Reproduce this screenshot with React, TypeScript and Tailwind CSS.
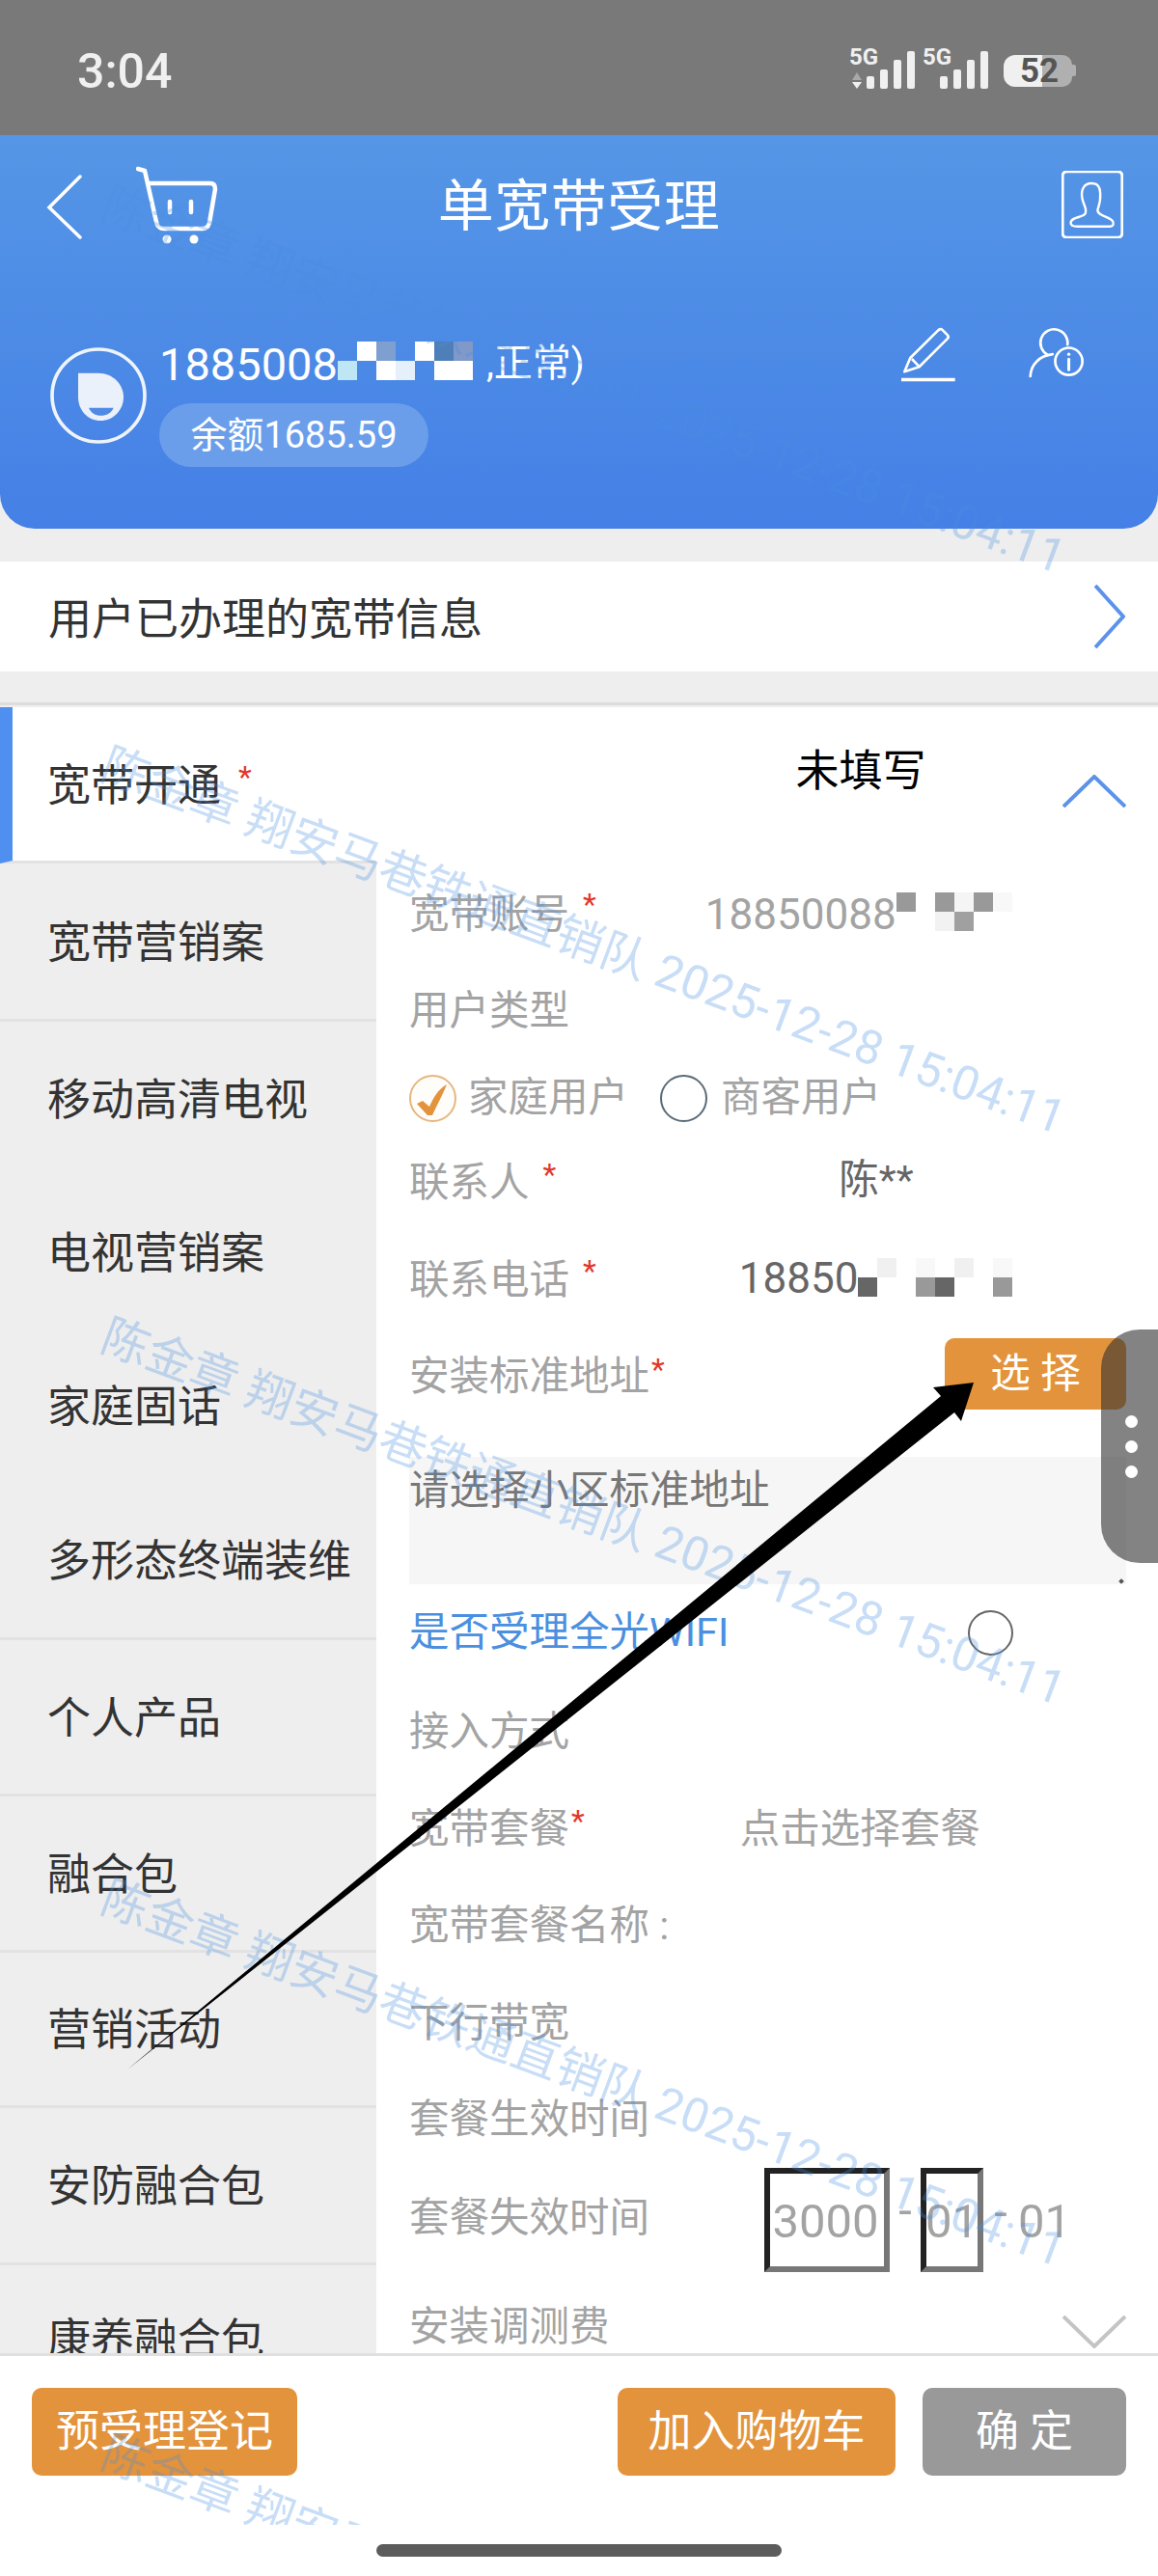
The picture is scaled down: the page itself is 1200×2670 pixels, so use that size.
const sideItems = [
  { label: '宽带开通', cls: 'h-[162px] border-b-[3px] border-b-[#e2e2e2] bg-white', active: true },
  { label: '宽带营销案', cls: 'h-[164px] border-b-[3px] border-b-[#e2e2e2]' },
  { label: '移动高清电视', cls: 'h-[160px]' },
  { label: '电视营销案', cls: 'h-[158px]' },
  { label: '家庭固话', cls: 'h-[159px]' },
  { label: '多形态终端装维', cls: 'h-[164px] border-b-[3px] border-b-[#e2e2e2]' },
  { label: '个人产品', cls: 'h-[162px] border-b-[3px] border-b-[#e2e2e2]' },
  { label: '融合包', cls: 'h-[162px] border-b-[3px] border-b-[#e2e2e2]' },
  { label: '营销活动', cls: 'h-[161px] border-b-[3px] border-b-[#e2e2e2]' },
  { label: '安防融合包', cls: 'h-[163px] border-b-[3px] border-b-[#e2e2e2]' },
  { label: '康养融合包', cls: 'h-[152px]' },
];

const watermarks = ['top-[187px]', 'top-[768px]', 'top-[1360px]', 'top-[1942px]', 'top-[2518px]'];

function Star({ className = '' }: { className?: string }) {
  return <span className={`text-[#e2382b] text-[32px] leading-none self-start mt-[26px] ${className}`}>*</span>;
}

function Mosaic({ rows }: { rows: string[][] }) {
  return (
    <div className="flex flex-col">
      {rows.map((row, i) => (
        <div key={i} className="flex">
          {row.map((c, j) => (
            <div key={j} className="w-[20px] h-[20px]" style={{ background: c }} />
          ))}
        </div>
      ))}
    </div>
  );
}

function Radio({ checked, className = '' }: { checked?: boolean; className?: string }) {
  if (checked) {
    return (
      <svg width="49" height="49" viewBox="0 0 49 49" className={className}>
        <circle cx="24.5" cy="24.5" r="23.5" fill="#fffdfa" stroke="#e8b67f" strokeWidth="2" />
        <path d="M8 30 L14 27 L21 33 C25 24 30 15 39 10 C35 20 29 31 24 42 L19 42 Z" fill="#e3933c" />
      </svg>
    );
  }
  return <div className={`w-[49px] h-[49px] rounded-full border-2 border-[#5a6b78] ${className}`} />;
}

function StatusIcons() {
  const bars = [
    [18, 79, 13],
    [32, 72, 20],
    [46, 62, 30],
    [60, 53, 39],
  ];
  return (
    <svg width="156" height="50" viewBox="880 48 156 50" className="block">
      <text x="880" y="67" fontFamily="Roboto" fontWeight="700" fontSize="24" fill="#f0f0f0">5G</text>
      <text x="956" y="67" fontFamily="Roboto" fontWeight="700" fontSize="24" fill="#f0f0f0">5G</text>
      <path d="M888 75 L893 83 H883 Z" fill="#a8a8a8" />
      <path d="M883 85 H893 L888 92 Z" fill="#f0f0f0" />
      {bars.map(([x, y, h]) => (
        <rect key={x} x={880 + x} y={y} width="8" height={h} rx="2" fill="#f0f0f0" />
      ))}
      {bars.map(([x, y, h]) => (
        <rect key={x} x={956 + x} y={y} width="8" height={h} rx="2" fill="#f0f0f0" />
      ))}
    </svg>
  );
}

function Battery() {
  return (
    <div className="relative flex items-center">
      <div className="w-[40px] h-[33px] bg-[#f0f0f0] rounded-l-[12px]" />
      <div className="w-[31px] h-[33px] bg-[#b0b0b0] rounded-r-[10px]" />
      <div className="w-[4px] h-[12px] bg-[#b0b0b0] rounded-r-[2px]" />
      <span className="absolute left-[17px] top-[-5px] font-bold text-[35px] leading-[43px] text-[#555]">52</span>
    </div>
  );
}

function CartIcon() {
  return (
    <svg width="86" height="84" viewBox="140 172 86 84" fill="none" stroke="white" strokeWidth="4.5" strokeLinecap="round" strokeLinejoin="round">
      <path d="M142 175 L149 177 L161 230 C162 235 164 237 169 237 H209 C213 237 215 235 216 231 L222 196 C222 192 220 190 217 190 H154" />
      <path d="M175 209 V220 M197 209 V220" />
      <circle cx="172" cy="248" r="4.5" fill="white" stroke="none" />
      <circle cx="200" cy="248" r="4.5" fill="white" stroke="none" />
    </svg>
  );
}

function ContactIcon() {
  return (
    <svg width="64" height="70" viewBox="543 56 186 206" fill="none" stroke="white">
      <rect x="545" y="58" width="182" height="202" rx="14" strokeWidth="9" />
      <path d="M640 95 C610 90 600 115 605 140 C608 160 620 170 615 185 C610 200 570 195 570 215 C570 225 580 226 590 226 L690 226 C700 226 702 218 698 210 C690 195 650 195 652 175 C655 165 662 150 660 125 C660 105 650 95 640 95 Z" strokeWidth="7" strokeLinejoin="round" />
    </svg>
  );
}

function EditIcon() {
  return (
    <svg width="63" height="60" viewBox="30 520 190 180" fill="none" stroke="white" strokeLinejoin="round">
      <path d="M52 665 L70 622 L158 535 C163 531 167 531 171 535 L186 550 C190 554 190 558 186 562 L98 650 Z" strokeWidth="8" />
      <path d="M75 625 L97 648" strokeWidth="8" />
      <path d="M42 690 H210" strokeWidth="10" />
    </svg>
  );
}

function UserInfoIcon() {
  return (
    <svg width="62" height="57" viewBox="425 530 185 170" fill="none" stroke="white" strokeWidth="8" strokeLinecap="round">
      <path d="M490 622 A42 42 0 1 1 551 590" />
      <path d="M436 688 C438 650 465 625 505 620" />
      <circle cx="555" cy="642" r="42" />
      <path d="M555 635 V668" strokeWidth="9" />
      <circle cx="555" cy="620" r="5" fill="white" stroke="none" />
    </svg>
  );
}

function Avatar() {
  return (
    <svg width="100" height="100" viewBox="155 660 300 300" fill="none" className="mt-[23px]">
      <circle cx="305" cy="810" r="144" stroke="#eef4fc" strokeWidth="11" />
      <path d="M242 740 H305 C350 740 383 775 383 815 C383 855 350 888 312 888 C272 888 242 855 242 815 Z" fill="#eaf1fb" />
      <path d="M275 848 H352 C345 864 330 872 313 872 C295 872 282 864 275 848 Z" fill="#4f8ae4" />
    </svg>
  );
}

function Header() {
  return (
    <div className="h-[408px] bg-gradient-to-b from-[#5596e6] to-[#4580e6] rounded-b-[36px] text-white">
      <div className="grid grid-cols-[1fr_auto_1fr] items-start pt-[32px] pl-[48px] pr-[36px] h-[165px]">
        <div className="flex items-start gap-[55px]">
          <svg width="38" height="68" viewBox="0 0 38 68" fill="none" stroke="white" strokeWidth="3.5" strokeLinecap="round" className="mt-[8px]">
            <path d="M35 3 L3 35 L35 66" />
          </svg>
          <CartIcon />
        </div>
        <div className="text-[58px] leading-[84px] tracking-[0.5px] -ml-[12px]">单宽带受理</div>
        <div className="flex justify-end mt-[5px]">
          <ContactIcon />
        </div>
      </div>
      <div className="flex items-start pl-[52px] pr-[74px] mt-[32px]">
        <Avatar />
        <div className="ml-[13px] flex-1">
          <div className="flex items-center h-[80px]">
            <span className="text-[47px] leading-none">1885008</span>
            <div className="-mt-[7px]">
              <Mosaic
                rows={[
                  ['transparent', '#ffffff', '#7f9fd0', 'transparent', '#ffffff', '#4f7fb8', '#8099c8'],
                  ['#bfe6f5', 'transparent', '#ffffff', '#e5f0fb', 'transparent', '#ffffff', '#ffffff'],
                ]}
              />
            </div>
            <span className="text-[40px] leading-none ml-[14px]">,正常)</span>
          </div>
          <div className="mt-[1px] w-[279px] h-[66px] rounded-[33px] bg-[#6b9eea] flex items-center justify-center text-[38px] leading-none">
            余额1685.59
          </div>
        </div>
        <div className="flex gap-[71px] items-start">
          <EditIcon />
          <UserInfoIcon />
        </div>
      </div>
    </div>
  );
}

function Sidebar() {
  return (
    <div className="w-[390px] shrink-0 bg-[#eeeeee]">
      {sideItems.map((item) => (
        <div key={item.label} className={`flex items-center pt-[3px] text-[45px] leading-none text-[#333] ${item.cls} ${item.active ? 'border-l-[13px] border-l-[#4f8ff0] pl-[36px]' : 'pl-[49px]'}`}>
          {item.label}
          {item.active && <Star className="ml-[18px] !mt-[53px]" />}
        </div>
      ))}
    </div>
  );
}

function Label({ children }: { children: string }) {
  return <span className="mt-[5px] text-[41.5px] leading-none text-[#a3a3a3]">{children}</span>;
}

function Form() {
  return (
    <div className="flex-1 bg-white pl-[34px] pr-[33px] text-[41.5px] leading-none text-[#a3a3a3]">
      <div className="h-[162px] relative">
        <div className="flex justify-center pl-[193px] pt-[44px] text-[45px] text-black">未填写</div>
        <svg width="66" height="34" viewBox="0 0 66 34" fill="none" stroke="#5b93ea" strokeWidth="4" className="absolute right-0 top-[70px]">
          <path d="M1 33 L33 2 L65 33" />
        </svg>
      </div>
      <div className="h-[100px] flex items-center">
        <Label>宽带账号</Label>
        <Star className="ml-[14px]" />
        <span className="mt-[5px] ml-[113px] text-[44px]">18850088</span>
        <Mosaic
          rows={[
            ['#999999', '#ffffff', '#999999', '#f5f5f5', '#999999', '#f8f8f8'],
            ['#ffffff', '#ffffff', '#f2f2f2', '#a0a0a0', '#ffffff', '#ffffff'],
          ]}
        />
      </div>
      <div className="h-[100px] flex items-center">
        <Label>用户类型</Label>
      </div>
      <div className="h-[86px] flex items-center">
        <Radio checked />
        <span className="ml-[12px]">家庭用户</span>
        <Radio className="ml-[33px]" />
        <span className="ml-[14px]">商客用户</span>
      </div>
      <div className="h-[84px] flex items-center">
        <Label>联系人</Label>
        <Star className="!mt-[20px] ml-[14px]" />
        <span className="ml-[293px] text-[#666]">陈**</span>
      </div>
      <div className="h-[118px] flex items-center">
        <Label>联系电话</Label>
        <Star className="!mt-[36px] ml-[14px]" />
        <span className="mt-[2px] ml-[148px] text-[44px] text-[#666]">18850</span>
        <Mosaic
          rows={[
            ['#ffffff', '#f0f0f0', '#ffffff', '#f8f8f8', '#ffffff', '#f0f0f0', '#ffffff', '#f8f8f8'],
            ['#666666', '#ffffff', '#ffffff', '#999999', '#666666', '#ffffff', '#ffffff', '#999999'],
          ]}
        />
      </div>
      <div className="h-[82px] flex items-center justify-between">
        <div className="flex items-center">
          <Label>安装标准地址</Label>
          <Star className="!mt-[2px] ml-[2px]" />
        </div>
        <div className="w-[188px] h-[74px] rounded-[10px] bg-[#e3933c] text-white flex items-center justify-center">选 择</div>
      </div>
      <div className="mt-[45px] h-[132px] bg-[#f6f6f6] pt-[14px] text-[#777] relative">
        请选择小区标准地址
        <div className="absolute right-[3px] bottom-[1px] w-[4px] h-[4px] bg-[#555] rotate-45" />
      </div>
      <div className="h-[100px] flex items-center justify-between pr-[117px]">
        <span className="text-[#4a8fe0]">是否受理全光WIFI</span>
        <div className="w-[47px] h-[47px] rounded-full border-2 border-[#666]" />
      </div>
      <div className="h-[101px] flex items-center">
        <Label>接入方式</Label>
      </div>
      <div className="h-[100px] flex items-center">
        <Label>宽带套餐</Label>
        <Star className="!mt-[28px] ml-[2px]" />
        <span className="mt-[5px] ml-[161px]">点击选择套餐</span>
      </div>
      <div className="h-[101px] flex items-center">
        <Label>宽带套餐名称 :</Label>
      </div>
      <div className="h-[100px] flex items-center">
        <Label>下行带宽</Label>
      </div>
      <div className="h-[100px] flex items-center">
        <Label>套餐生效时间</Label>
      </div>
      <div className="h-[104px] flex items-center">
        <Label>套餐失效时间</Label>
        <div className="ml-[119px] flex items-center text-[49px] mt-[10px]">
          <div className="w-[130px] h-[108px] border-[6px] border-t-[#222] border-l-[#222] border-b-[#777] border-r-[#777] flex items-center justify-center pt-[3px] pr-[3px]">3000</div>
          <span className="w-[32px] text-center pb-[20px]">-</span>
          <div className="w-[65px] h-[108px] border-[6px] border-t-[#222] border-l-[#222] border-b-[#777] border-r-[#777] flex items-center justify-center pt-[3px]">01</div>
          <span className="w-[36px] text-center pb-[16px]">-</span>
          <span className="pt-[3px]">01</span>
        </div>
      </div>
      <div className="h-[122px] flex items-center justify-between">
        <Label>安装调测费</Label>
        <svg width="66" height="34" viewBox="0 0 66 34" fill="none" stroke="#c4c4c4" strokeWidth="4" className="mt-[15px]">
          <path d="M1 1 L33 32 L65 1" />
        </svg>
      </div>
    </div>
  );
}

function BottomBar() {
  return (
    <div className="relative h-[231px] bg-white border-t-[3px] border-t-[#e0e0e0] pt-[33px] px-[33px] text-[45px] leading-none text-white">
      <div className="flex justify-between">
        <div className="w-[275px] h-[91px] rounded-[10px] bg-[#e3933c] flex items-center justify-center">预受理登记</div>
        <div className="flex gap-[28px]">
          <div className="w-[288px] h-[91px] rounded-[10px] bg-[#e3933c] flex items-center justify-center">加入购物车</div>
          <div className="w-[211px] h-[91px] rounded-[10px] bg-[#999999] flex items-center justify-center">确 定</div>
        </div>
      </div>
      <div className="mx-auto mt-[71px] ml-[357px] w-[420px] h-[13px] rounded-full bg-[#5c5c5c]" />
    </div>
  );
}

export default function App() {
  return (
    <div className="relative w-[1200px] h-[2670px] overflow-hidden flex flex-col bg-white font-['Roboto','Noto_Sans_CJK_SC',sans-serif]">
      <div className="h-[140px] shrink-0 bg-[#797979] flex items-center justify-between pl-[80px] pr-[85px]">
        <span className="text-[50px] leading-none font-medium text-[#f0f0f0] mt-[8px]">3:04</span>
        <div className="flex items-center gap-[4px] mt-[6px]">
          <StatusIcons />
          <Battery />
        </div>
      </div>
      <div className="shrink-0 bg-[#eeeeee] pb-[34px]">
        <Header />
      </div>
      <div className="h-[114px] shrink-0 bg-white flex items-center justify-between pl-[50px] pr-[34px] text-[45px] leading-none text-[#333]">
        <span className="mt-[6px]">用户已办理的宽带信息</span>
        <svg width="32" height="66" viewBox="0 0 32 66" fill="none" stroke="#5b93ea" strokeWidth="4">
          <path d="M1 1 L30 33 L1 65" />
        </svg>
      </div>
      <div className="h-[37px] shrink-0 bg-[#eeeeee] pt-[32px]">
        <div className="h-[3px] bg-[#dddddd]" />
      </div>
      <div className="flex-1 min-h-0 overflow-hidden flex">
        <Sidebar />
        <Form />
      </div>
      <BottomBar />

      {/* watermark layer */}
      <div className="absolute left-0 top-0 w-[1200px] h-[2617px] overflow-hidden pointer-events-none">
        {watermarks.map((top) => (
          <div key={top} className={`absolute left-[116px] ${top} origin-top-left rotate-[20.4deg] whitespace-nowrap text-[49px] leading-none text-[#4a90e2]/30`}>
            陈金章 翔安马巷铁通直销队 2025-12-28 15:04:11
          </div>
        ))}
      </div>

      {/* arrow annotation */}
      <svg width="1200" height="2670" viewBox="0 0 1200 2670" className="absolute left-0 top-0 pointer-events-none">
        <polygon points="132,2145 975,1447 967,1438 1009,1433 996,1473 989,1464" fill="black" />
      </svg>

      {/* floating handle */}
      <div className="absolute right-0 top-[1378px] w-[59px] h-[242px] rounded-l-[40px] bg-[rgba(48,48,48,0.6)] flex flex-col items-center gap-[13px] pt-[89px] pl-[4px]">
        <div className="w-[13px] h-[13px] rounded-full bg-white" />
        <div className="w-[13px] h-[13px] rounded-full bg-white" />
        <div className="w-[13px] h-[13px] rounded-full bg-white" />
      </div>
    </div>
  );
}
